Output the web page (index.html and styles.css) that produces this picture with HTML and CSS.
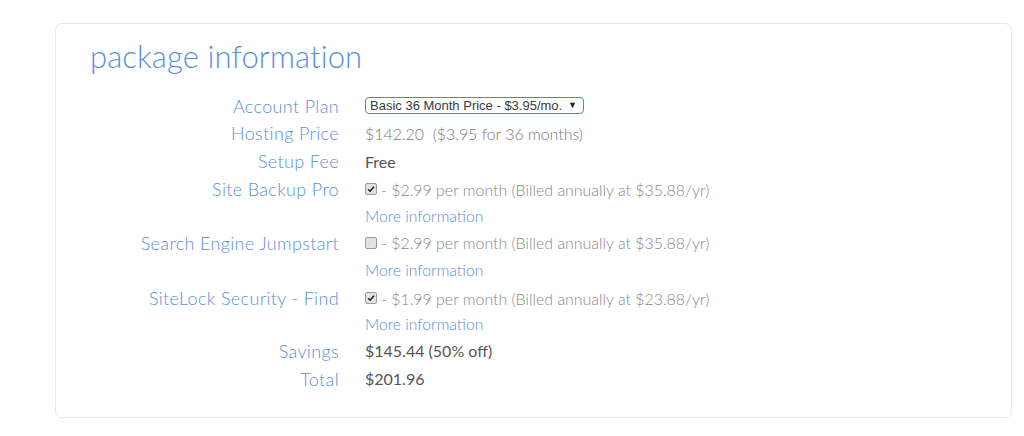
FILE: index.html
```html
<!DOCTYPE html>
<html>
<head>
<meta charset="utf-8">
<link rel="stylesheet" href="styles.css">
</head>
<body>
<div class="page">
  <section class="card">
    <h1 class="title">package information</h1>
    <div class="form">
      <div class="label">Account Plan</div>
      <div class="value">
        <div class="select"><span class="select-text">Basic 36 Month Price - $3.95/mo.</span><span class="arrow">&#9660;</span></div>
      </div>

      <div class="label">Hosting Price</div>
      <div class="value muted">$142.20&nbsp; ($3.95 for 36 months)</div>

      <div class="label">Setup Fee</div>
      <div class="value dark">Free</div>

      <div class="label">Site Backup Pro</div>
      <div class="value addon"><span class="check on"><svg viewBox="0 0 12 12" width="12" height="12"><path d="M2.6 6.2 L5 8.6 L9.6 3.2" fill="none" stroke="#222" stroke-width="1.8"/></svg></span> - $2.99 per month (Billed annually at $35.88/yr)</div>
      <div class="label"></div>
      <div class="value"><a class="more" href="#">More information</a></div>

      <div class="label">Search Engine Jumpstart</div>
      <div class="value addon"><span class="check"></span> - $2.99 per month (Billed annually at $35.88/yr)</div>
      <div class="label"></div>
      <div class="value"><a class="more" href="#">More information</a></div>

      <div class="label">SiteLock Security - Find</div>
      <div class="value addon"><span class="check on"><svg viewBox="0 0 12 12" width="12" height="12"><path d="M2.6 6.2 L5 8.6 L9.6 3.2" fill="none" stroke="#222" stroke-width="1.8"/></svg></span> - $1.99 per month (Billed annually at $23.88/yr)</div>
      <div class="label"></div>
      <div class="value"><a class="more" href="#">More information</a></div>

      <div class="label">Savings</div>
      <div class="value dark">$145.44 (50% off)</div>

      <div class="label">Total</div>
      <div class="value dark">$201.96</div>
    </div>
  </section>
</div>
</body>
</html>
```
FILE: styles.css
```css
html, body {
  margin: 0;
  padding: 0;
  background: #ffffff;
}
body {
  font-family: Lato, "Open Sans", sans-serif;
}
.page {
  padding: 23px 13px 0 55px;
}
.card {
  box-sizing: border-box;
  width: 957px;
  height: 395px;
  border: 1px solid #dfe8f4;
  border-radius: 7px;
  padding: 0 0 0 34px;
}
.title {
  margin: 12px 0 0 0;
  font-weight: 300;
  font-size: 31px;
  line-height: 40px;
  color: #5a8fdc;
  letter-spacing: 0.1px;
}
.form {
  margin-top: 16px;
  display: grid;
  grid-template-columns: 249px auto;
  column-gap: 26px;
  grid-template-rows: 27px 28.5px 27.5px 28px 26px 27px 28.5px 27px 25.5px 27.5px 28px;
  align-items: center;
}
.label {
  text-align: right;
  font-weight: 300;
  font-size: 18px;
  letter-spacing: 0.35px;
  color: #5b8fd6;
  white-space: nowrap;
}
.value {
  font-size: 15.9px;
  font-weight: 300;
  white-space: nowrap;
  display: flex;
  align-items: center;
}
.muted { color: #777777; }
.dark { color: #555555; font-weight: 400; font-size: 16px; }
.addon { color: #888888; }
.select {
  box-sizing: border-box;
  width: 219px;
  height: 17px;
  border: 1px solid #4d84d6;
  border-radius: 4px;
  display: flex;
  align-items: center;
  justify-content: space-between;
  padding: 0 6px 0 4px;
  font-family: "Liberation Sans", Arial, sans-serif;
  font-size: 13px;
  line-height: 15px;
  color: #3a3a3a;
  font-weight: 400;
}
.arrow {
  font-size: 9px;
  color: #222222;
}
.check {
  box-sizing: border-box;
  width: 12px;
  height: 12px;
  border: 1px solid #9a9a9a;
  border-radius: 2px;
  background: #e2e2e2;
  display: inline-flex;
  align-items: center;
  justify-content: center;
  margin-right: 4px;
}
.check svg { display: block; }
.more {
  color: #5b8fd6;
  text-decoration: none;
  font-size: 15.7px;
  font-weight: 300;
}
```
